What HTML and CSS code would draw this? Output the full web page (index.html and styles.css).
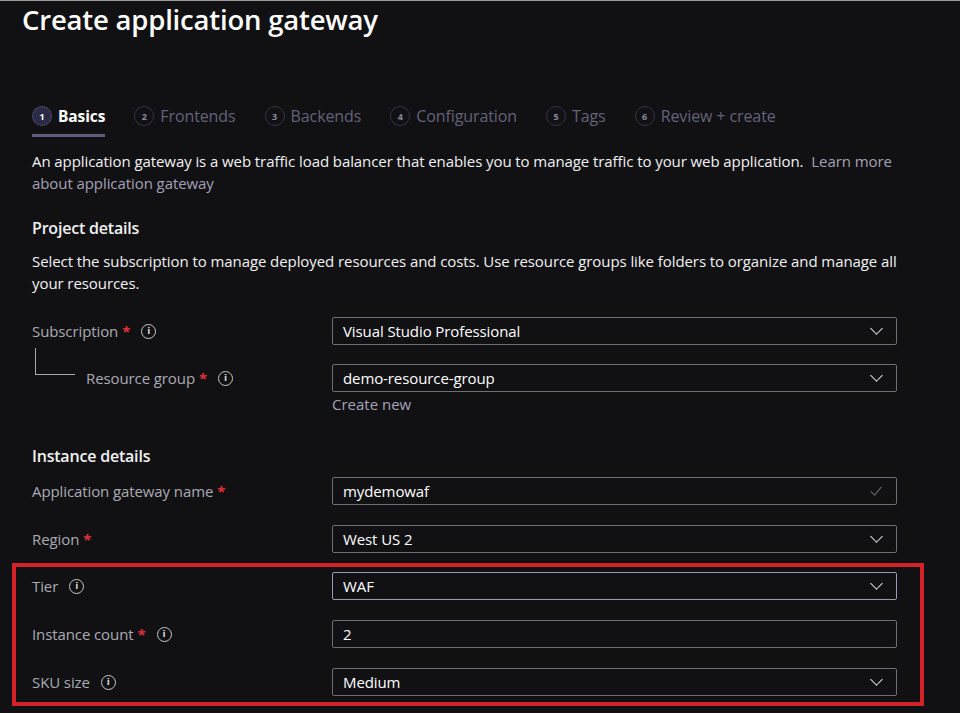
FILE: index.html
```html
<!DOCTYPE html>
<html lang="en">
<head>
<meta charset="utf-8">
<title>Create application gateway</title>
<link rel="stylesheet" href="styles.css">
</head>
<body>
<div class="page">
  <h1 class="title">Create application gateway</h1>

  <nav class="tabs">
    <div class="tab active"><span class="num">1</span><span class="tab-label">Basics</span></div>
    <div class="tab"><span class="num">2</span><span class="tab-label">Frontends</span></div>
    <div class="tab"><span class="num">3</span><span class="tab-label">Backends</span></div>
    <div class="tab"><span class="num">4</span><span class="tab-label">Configuration</span></div>
    <div class="tab"><span class="num">5</span><span class="tab-label">Tags</span></div>
    <div class="tab"><span class="num">6</span><span class="tab-label">Review + create</span></div>
  </nav>

  <div class="content">
    <p class="desc">An application gateway is a web traffic load balancer that enables you to manage traffic to your web application. <a class="link" href="#">Learn more about application gateway</a></p>

    <h2 class="section">Project details</h2>
    <p class="desc">Select the subscription to manage deployed resources and costs. Use resource groups like folders to organize and manage all your resources.</p>

    <div class="form project">
      <div class="row">
        <div class="label">Subscription<span class="req">*</span><span class="info">i</span></div>
        <div class="field select"><span class="value">Visual Studio Professional</span><span class="chev"></span></div>
      </div>
      <div class="row sub">
        <div class="label"><span class="tree"></span>Resource group<span class="req">*</span><span class="info">i</span></div>
        <div class="field-wrap">
          <div class="field select"><span class="value">demo-resource-group</span><span class="chev"></span></div>
          <a class="link create" href="#">Create new</a>
        </div>
      </div>
    </div>

    <h2 class="section inst">Instance details</h2>

    <div class="form instance">
      <div class="row">
        <div class="label">Application gateway name<span class="req">*</span></div>
        <div class="field"><span class="value">mydemowaf</span><span class="check"></span></div>
      </div>
      <div class="row">
        <div class="label">Region<span class="req">*</span></div>
        <div class="field select"><span class="value">West US 2</span><span class="chev"></span></div>
      </div>
    </div>

    <div class="highlight">
      <div class="form">
        <div class="row">
          <div class="label">Tier<span class="info">i</span></div>
          <div class="field select focus"><span class="value">WAF</span><span class="chev"></span></div>
        </div>
        <div class="row">
          <div class="label">Instance count<span class="req">*</span><span class="info">i</span></div>
          <div class="field"><span class="value">2</span></div>
        </div>
        <div class="row">
          <div class="label">SKU size<span class="info">i</span></div>
          <div class="field select"><span class="value">Medium</span><span class="chev"></span></div>
        </div>
      </div>
    </div>
  </div>
</div>
</body>
</html>
```

FILE: styles.css
```css
* { box-sizing: border-box; }
html, body {
  margin: 0;
  padding: 0;
  background: #111113;
}
body {
  font-family: "Open Sans", "Noto Sans", sans-serif;
  color: #f2f2f2;
  font-size: 15px;
  height: 713px;
  overflow: hidden;
}
.page {
  border-top: 1px solid #9a9a9a;
}
.title {
  margin: 0;
  padding: 0 0 0 22px;
  font-size: 27.5px;
  font-weight: 600;
  line-height: 38px;
  color: #ffffff;
  letter-spacing: -0.2px;
}
.tabs {
  display: flex;
  gap: 29px;
  padding: 62px 0 0 32px;
}
.tab {
  display: flex;
  align-items: center;
  height: 36px;
  padding-bottom: 3px;
  color: #64627a;
  font-size: 16px;
  letter-spacing: -0.1px;
  border-bottom: 3px solid transparent;
}
.tab.active {
  color: #ffffff;
  font-weight: 700;
  font-size: 15.5px;
  border-bottom-color: #5e5c7a;
}
.num {
  width: 20px;
  height: 20px;
  border-radius: 50%;
  border: 1px solid #34324e;
  font-size: 9px;
  font-weight: 700;
  display: inline-flex;
  align-items: center;
  justify-content: center;
  margin-right: 6px;
  color: #8a88a4;
  letter-spacing: 0;
}
.tab.active .num {
  background: #2c2b47;
  border: 1px dotted #6a688a;
  color: #ffffff;
}
.content {
  padding: 13px 0 0 32px;
  width: 897px;
}
.desc {
  margin: 0;
  font-size: 15px;
  line-height: 22px;
  letter-spacing: -0.08px;
}
.link {
  color: #a3a1b6;
  text-decoration: none;
  margin-left: 4px;
}
.section {
  margin: 23px 0 11px;
  font-size: 16px;
  font-weight: 600;
  line-height: 22px;
  letter-spacing: -0.2px;
}
.section.inst { margin: 31px 0 0; }
.form {
  display: flex;
  flex-direction: column;
  gap: 20px;
}
.form.project {
  gap: 19px;
  margin-top: 23px;
}
.form.instance { margin-top: 10px; }
.row {
  display: grid;
  grid-template-columns: 300px 565px;
  align-items: start;
}
.label {
  display: flex;
  align-items: center;
  height: 28px;
  color: #abaab3;
  font-size: 15px;
  letter-spacing: -0.1px;
}
.row.sub .label { padding-left: 3px; }
.tree {
  width: 40px;
  height: 27px;
  border-left: 1px solid #a8a8a8;
  border-bottom: 1px solid #a8a8a8;
  margin: -16px 11px 0 0;
  align-self: flex-start;
}
.req {
  color: #e0303a;
  margin-left: 4px;
  font-weight: 700;
}
.info {
  width: 15px;
  height: 15px;
  border-radius: 50%;
  border: 1px solid #c8c8cc;
  color: #d0d0d4;
  font-size: 9px;
  font-weight: 700;
  display: inline-flex;
  align-items: center;
  justify-content: center;
  margin-left: 11px;
  font-family: "DejaVu Sans", sans-serif;
  letter-spacing: 0;
}
.field {
  height: 28px;
  border: 1px solid #6e6e74;
  border-radius: 2px;
  display: flex;
  align-items: center;
  justify-content: space-between;
  padding: 0 11px 0 10px;
  color: #ffffff;
  font-size: 15px;
  letter-spacing: -0.1px;
}
.field.focus { border-color: #9a9ab8; }
.chev {
  width: 9px;
  height: 9px;
  border-right: 1.3px solid #e4e4e8;
  border-bottom: 1.3px solid #e4e4e8;
  transform: rotate(45deg);
  margin: -6px 4px 0 0;
}
.check {
  width: 6px;
  height: 11px;
  border-right: 1px solid #6a6a70;
  border-bottom: 1px solid #6a6a70;
  transform: rotate(40deg);
  margin: -4px 6px 0 0;
}
.create {
  display: block;
  margin: 2px 0 0;
  font-size: 15px;
  line-height: 20px;
}
.highlight {
  margin: 10px 0 0 -20px;
  width: 912px;
  border: 4px solid #d42229;
  padding: 5px 0 6px 16px;
}
```
